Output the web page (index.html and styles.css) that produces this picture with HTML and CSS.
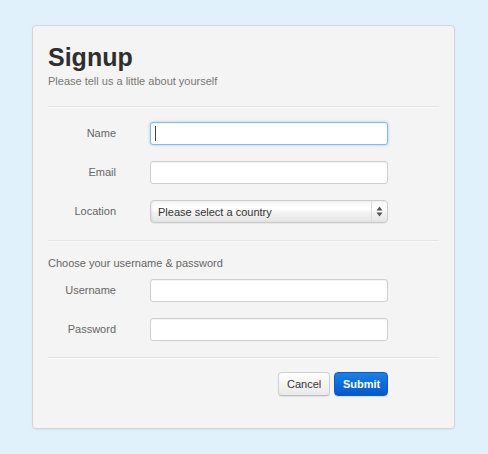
FILE: index.html
```html
<!DOCTYPE html>
<html>
<head>
<meta charset="utf-8">
<link rel="stylesheet" href="styles.css">
</head>
<body>
<form class="card">
  <h1 class="title">Signup</h1>
  <p class="subtitle">Please tell us a little about yourself</p>
  <hr class="rule rule-top">
  <div class="row">
    <label class="label" for="name">Name</label>
    <div class="control">
      <input class="input input-focus" id="name" type="text">
      <span class="caret"></span>
    </div>
  </div>
  <div class="row">
    <label class="label" for="email">Email</label>
    <div class="control"><input class="input" id="email" type="text"></div>
  </div>
  <div class="row">
    <label class="label" for="loc">Location</label>
    <div class="control">
      <select class="select" id="loc"><option>Please select a country</option></select>
      <span class="select-arrow">
        <svg width="7" height="11" viewBox="0 0 7 11"><path d="M3.5 0.5 L6.5 4.5 L0.5 4.5 Z" fill="#555"/><path d="M3.5 10.5 L6.5 6.5 L0.5 6.5 Z" fill="#555"/></svg>
      </span>
    </div>
  </div>
  <hr class="rule rule-mid">
  <p class="section">Choose your username &amp; password</p>
  <div class="row row-first">
    <label class="label" for="user">Username</label>
    <div class="control"><input class="input" id="user" type="text"></div>
  </div>
  <div class="row">
    <label class="label" for="pass">Password</label>
    <div class="control"><input class="input" id="pass" type="password"></div>
  </div>
  <hr class="rule rule-bottom">
  <div class="actions">
    <button type="button" class="btn btn-default">Cancel</button>
    <button type="button" class="btn btn-primary">Submit</button>
  </div>
</form>
</body>
</html>
```
FILE: styles.css
```css
html, body {
  margin: 0;
  padding: 0;
}
body {
  background: #e0f1fc;
  font-family: "Liberation Sans", Arial, Helvetica, sans-serif;
  height: 454px;
  overflow: hidden;
}
.card {
  box-sizing: border-box;
  width: 423px;
  margin: 25px 0 0 32px;
  padding: 17px 15px 32px 15px;
  background: #f4f4f4;
  border: 1px solid #d2d6d9;
  border-radius: 4px;
  box-shadow: 0 1px 2px rgba(0, 0, 0, 0.06);
}
.title {
  margin: 0;
  font-size: 25px;
  line-height: 28px;
  font-weight: bold;
  color: #2f2f2f;
}
.subtitle {
  margin: 3px 0 0 0;
  font-size: 11px;
  line-height: 15px;
  color: #777;
}
.rule {
  border: 0;
  border-top: 1px solid #e4e4e4;
  border-bottom: 1px solid #fafafa;
  height: 0;
  margin: 0;
}
.rule-top { margin: 17px 0 14px 0; }
.rule-mid { margin: 17px 0 14px 0; }
.rule-bottom { margin: 16px 0 13px 0; }
.row {
  display: flex;
  align-items: center;
  margin-top: 16px;
}
.rule + .row { margin-top: 0; }
.row-first { margin-top: 8px; }
.label {
  width: 68px;
  margin-right: 34px;
  text-align: right;
  font-size: 11px;
  line-height: 23px;
  color: #666;
}
.control {
  position: relative;
  width: 238px;
  height: 23px;
}
.input {
  box-sizing: border-box;
  display: block;
  width: 238px;
  height: 23px;
  margin: 0;
  padding: 0 5px;
  border: 1px solid #cfcfcf;
  border-radius: 3px;
  background: #fff;
  box-shadow: inset 0 1px 1px rgba(0, 0, 0, 0.05);
  font-family: inherit;
  font-size: 11px;
  outline: none;
}
.input-focus {
  border-color: #86b9ea;
  box-shadow: 0 0 3px rgba(82, 168, 236, 0.55), inset 0 1px 1px rgba(0, 0, 0, 0.04);
}
.caret {
  position: absolute;
  left: 5px;
  top: 4px;
  width: 1px;
  height: 15px;
  background: #444;
}
.select {
  box-sizing: border-box;
  display: block;
  width: 238px;
  height: 23px;
  margin: 0;
  padding: 0 0 0 7px;
  border: 1px solid #cbcbcb;
  border-radius: 4px;
  -webkit-appearance: none;
  appearance: none;
  background: linear-gradient(to bottom, #f6f6f6 0%, #ffffff 35%, #f1f1f1 60%, #e6e6e6 100%);
  box-shadow: inset 1px 0 2px rgba(0, 0, 0, 0.08), 0 1px 1px rgba(0, 0, 0, 0.06);
  font-family: inherit;
  font-size: 11px;
  color: #333;
  outline: none;
}
.select-arrow {
  position: absolute;
  top: 1px;
  right: 1px;
  width: 15px;
  height: 21px;
  border-left: 1px solid #dcdcdc;
  display: flex;
  align-items: center;
  justify-content: center;
}
.section {
  margin: 0;
  font-size: 11px;
  line-height: 15px;
  color: #666;
}
.actions {
  display: flex;
  justify-content: flex-end;
  gap: 4px;
  padding-right: 51px;
}
.btn {
  box-sizing: border-box;
  height: 24px;
  padding: 0 8px;
  border-radius: 4px;
  font-family: inherit;
  font-size: 11px;
  line-height: 22px;
  cursor: pointer;
}
.btn-default {
  width: 52px;
  color: #333;
  border: 1px solid #d0d0d0;
  border-bottom-color: #bdbdbd;
  background: linear-gradient(to bottom, #ffffff, #e9e9e9);
  box-shadow: 0 1px 1px rgba(0, 0, 0, 0.08);
}
.btn-primary {
  width: 54px;
  color: #fff;
  font-weight: bold;
  border: 1px solid #0a5ccc;
  background: linear-gradient(to bottom, #1a80e6, #0158cf);
  box-shadow: 0 1px 1px rgba(0, 0, 0, 0.1);
}
```
